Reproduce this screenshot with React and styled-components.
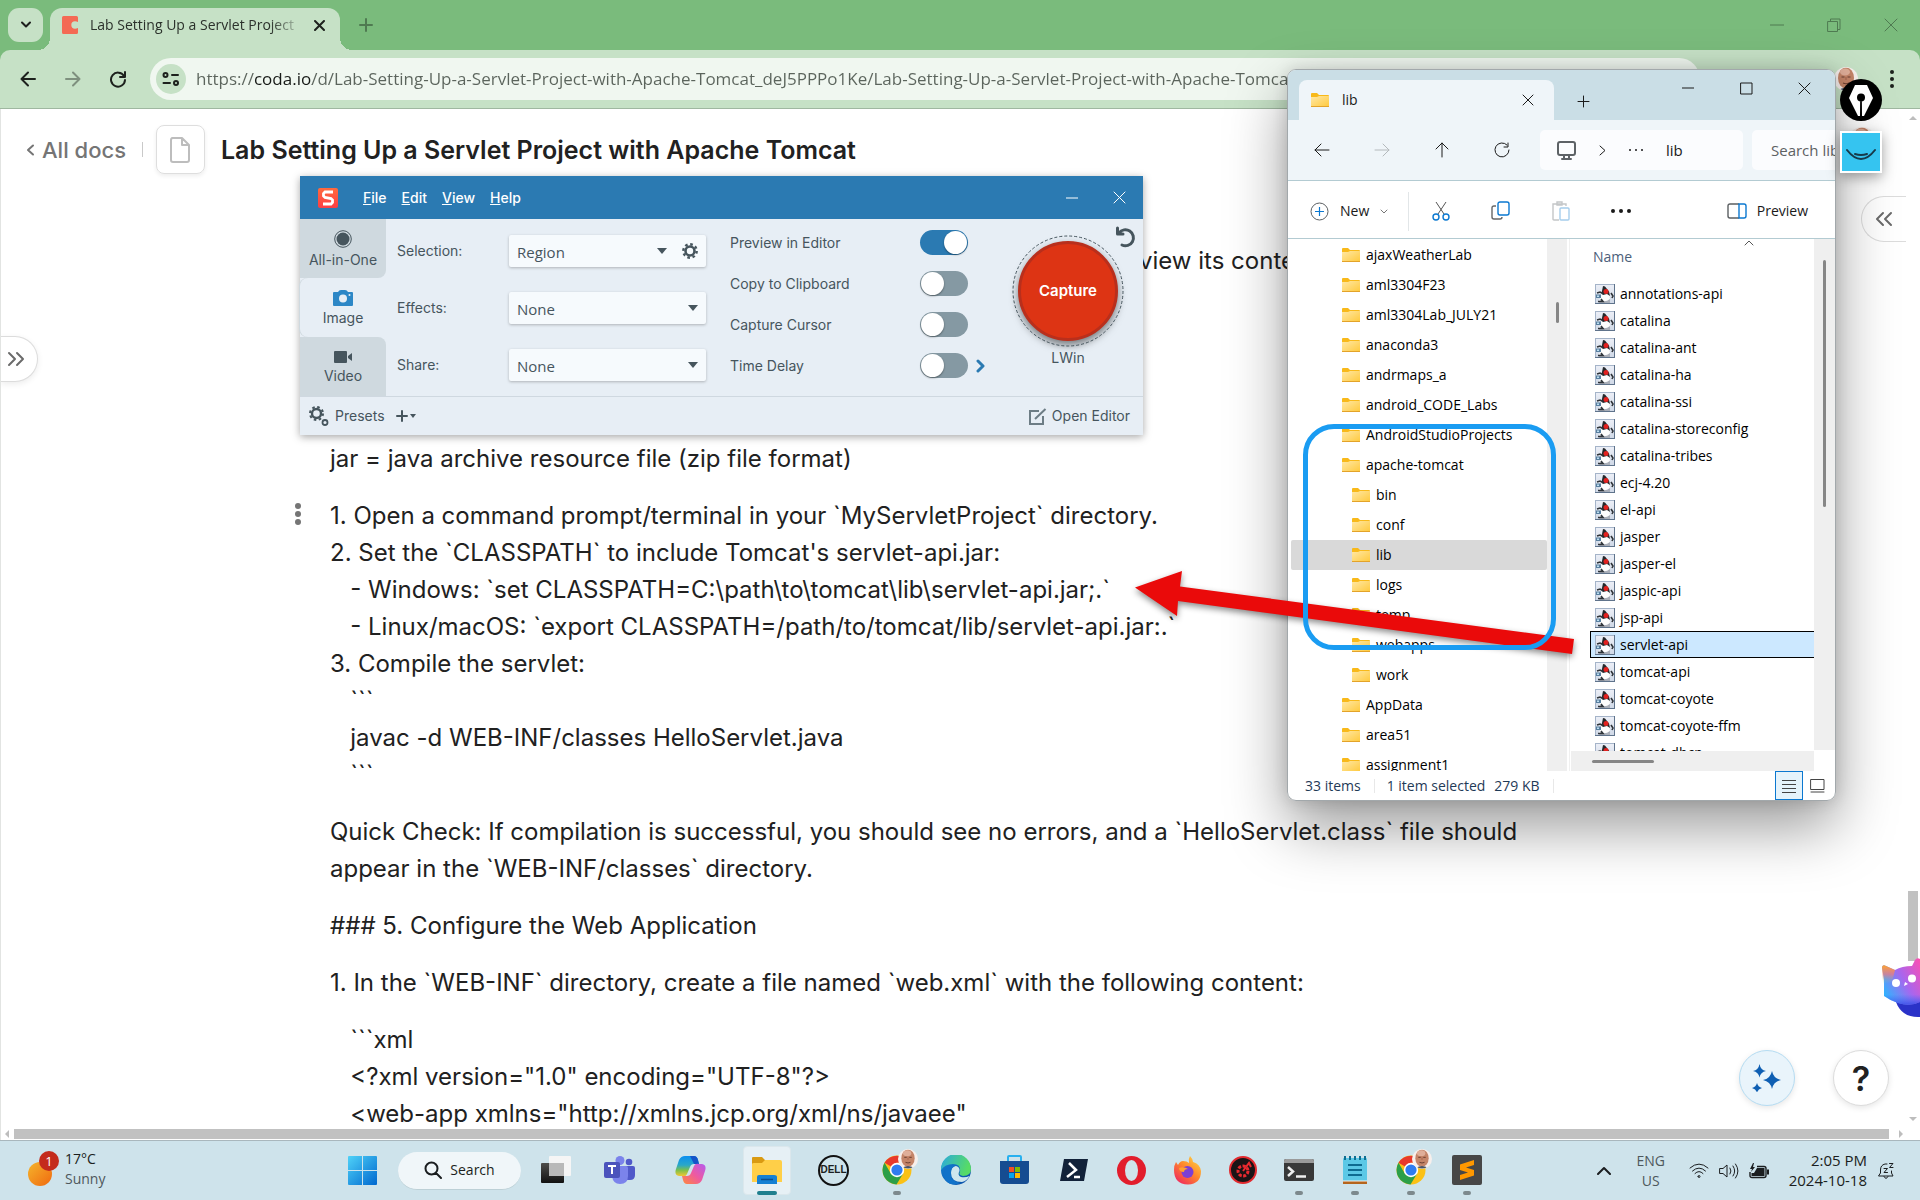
import React from "react";
import styled, { createGlobalStyle, css } from "styled-components";

const SEGOE = `"Open Sans", "Noto Sans", sans-serif`;
const INTER = `Inter, "Liberation Sans", sans-serif`;

const GlobalStyle = createGlobalStyle`
  *, *::before, *::after { box-sizing: border-box; }
  body { margin: 0; font-family: ${SEGOE}; background: #fff; }
  button { border: 0; padding: 0; margin: 0; background: none; color: inherit; font: inherit; display: inline-flex; align-items: center; justify-content: center; flex: none; }
  input, select { font: inherit; color: inherit; margin: 0; }
  ul { list-style: none; margin: 0; padding: 0; }
  p, h1 { margin: 0; }
  svg { display: block; flex: none; }
`;

const Desktop = styled.div`
  position: relative;
  height: 100vh;
  overflow: hidden;
  display: flex;
  flex-direction: column;
`;

/* ---------- browser ---------- */

const Browser = styled.section`
  flex: 1;
  min-height: 0;
  display: flex;
  flex-direction: column;
  background: #7abb7c;
`;

const TabStrip = styled.header`
  height: 50px;
  flex: none;
  display: flex;
  align-items: flex-start;
  padding: 8px 1px 0 8px;
  color: #4f7a51;
`;

const TabSearch = styled.button`
  width: 35px;
  height: 34px;
  border-radius: 11px;
  background: #c6e1c6;
  color: #1d1f1d;
`;

const Tab = styled.div`
  position: relative;
  width: 290px;
  height: 42px;
  margin-left: 7px;
  padding: 0 15px 8px 12px;
  border-radius: 12px 12px 0 0;
  background: #c6e1c6;
  color: #2b312b;
  display: flex;
  align-items: center;
  gap: 12px;

  &::before,
  &::after {
    content: "";
    position: absolute;
    bottom: 0;
    width: 12px;
    height: 12px;
  }
  &::before { left: -12px; background: radial-gradient(circle at 0 0, transparent 12px, #c6e1c6 12px); }
  &::after { right: -12px; background: radial-gradient(circle at 100% 0, transparent 12px, #c6e1c6 12px); }
  button { margin-left: auto; color: #1d211d; }
`;

const TabTitle = styled.span`
  white-space: nowrap;
  font-size: 14px;
  line-height: 24px;
  mask-image: linear-gradient(90deg, #000 88%, rgba(0, 0, 0, 0.3));
`;

const NewTab = styled.button`
  width: 28px;
  height: 34px;
  margin-left: 12px;
`;

const WindowButtons = styled.div`
  display: flex;
  margin-left: auto;
  button { width: 57px; height: 34px; }
`;

const Toolbar = styled.div`
  height: 59px;
  flex: none;
  display: flex;
  align-items: center;
  padding: 0 26px 1px 14px;
  background: #c6e1c6;
  border-bottom: 1px solid #9fb7a0;
  border-radius: 10px 10px 0 0;
  color: #1d211d;
`;

const NavButton = styled.button`
  width: 28px;
  height: 28px;
  margin-right: 17px;
  opacity: ${(p) => (p.$dim ? 0.42 : 1)};
`;

const Omnibox = styled.label`
  flex: 1;
  max-width: 1550px;
  height: 42px;
  margin-left: 1px;
  padding-left: 6px;
  border-radius: 21px;
  background: #f0f7f0;
  display: flex;
  align-items: center;
  gap: 10px;
`;

const SiteInfo = styled.span`
  width: 30px;
  height: 30px;
  border-radius: 50%;
  background: #c6e1c6;
  display: grid;
  place-items: center;
`;

const UrlInput = styled.input`
  flex: 1;
  min-width: 0;
  height: 32px;
  border: 0;
  padding: 0;
  font-size: 17px;
  color: #5b645c;
  -webkit-text-fill-color: transparent;
  background: linear-gradient(90deg, #5b645c 58px, #161916 58px, #161916 116px, #5b645c 116px);
  -webkit-background-clip: text;
  background-clip: text;
`;

const ToolbarEnd = styled.div`
  margin-left: auto;
  display: flex;
  align-items: center;
  gap: 32px;
`;

const Viewport = styled.div`
  flex: 1;
  min-height: 0;
  display: grid;
  grid-template-columns: minmax(0, 1fr) 14px;
  grid-template-rows: minmax(0, 1fr) 12px;
  background: #fff;
  border-left: 1px solid #e2e4e2;
  color: #212121;
  font-family: ${INTER};
`;

const Doc = styled.main`
  position: relative;
  overflow: hidden;
`;

const DocHeader = styled.div`
  display: flex;
  align-items: center;
  padding: 16px 0 0 24px;
  font-size: 22px;
  line-height: 28px;
  font-weight: 500;
`;

const BackLink = styled.a`
  display: flex;
  align-items: center;
  gap: 7px;
  color: #757575;
  text-decoration: none;
  padding-right: 16px;
`;

const HeaderRule = styled.span`
  width: 1px;
  height: 15px;
  background: #c9c9c9;
`;

const PageIcon = styled.button`
  width: 49px;
  height: 49px;
  margin: 0 16px 0 13px;
  border: 1px solid #dedede;
  border-radius: 8px;
  box-shadow: 0 2px 4px rgba(0, 0, 0, 0.07);
`;

const DocTitle = styled.h1`
  font-size: 25px;
  line-height: 30px;
  font-weight: 600;
`;

const DocBody = styled.article`
  padding: 68px 0 0 329px;
  font-size: 24px;
  line-height: 37px;
`;

const Paragraph = styled.p`
  max-width: 1250px;
  margin-bottom: 20px;
  white-space: pre-wrap;
`;

const TrailingLine = styled(Paragraph)`
  max-width: none;
  padding-left: 809px;
  margin-bottom: 161px;
`;

const DragHandle = styled.button`
  position: absolute;
  left: 290px;
  top: 392px;
  width: 14px;
  height: 26px;
`;

const SideTab = styled.button`
  position: absolute;
  width: 45px;
  height: 46px;
  background: #fff;
  border: 1px solid #dcdcdc;
  color: #6b6b6b;
  ${(p) =>
    p.$side === "left"
      ? css`left: 0; top: 227px; width: 37px; border-left: 0; border-radius: 0 23px 23px 0; box-shadow: 0 2px 6px rgba(0, 0, 0, 0.08); padding-right: 6px;`
      : css`right: 0; top: 87px; border-right: 0; border-radius: 23px 0 0 23px;`}
`;

const RoundButton = styled.button`
  width: 56px;
  height: 56px;
  border-radius: 50%;
  border: 1px solid ${(p) => (p.$accent ? "#b5dcf2" : "#dcdcdc")};
  background: ${(p) => (p.$accent ? "#e9f4fb" : "#fff")};
  box-shadow: 0 2px 6px rgba(0, 0, 0, 0.1);
  font-size: 34px;
  font-weight: 600;
`;

const FloatingActions = styled.div`
  position: absolute;
  right: 17px;
  bottom: 22px;
  display: flex;
  gap: 38px;
`;

const Mascot = styled.div`
  position: absolute;
  right: 0;
  bottom: 182px;
`;

const VScroll = styled.div`
  display: flex;
  flex-direction: column;
  align-items: center;
  padding: 6px 2px 6px;
  svg:last-child { margin-top: auto; }
`;

const VThumb = styled.span`
  width: 10px;
  height: 70px;
  margin-top: 771px;
  background: #c1c1c1;
`;

const HScroll = styled.div`
  grid-column: 1 / -1;
  display: flex;
  align-items: center;
  gap: 5px;
  padding: 0 16px 0 3px;
`;

const HThumb = styled.span`
  flex: 1;
  height: 10px;
  background: #c1c1c1;
  margin-right: 5px;
`;

/* ---------- capture window ---------- */

const CaptureWindow = styled.section`
  position: absolute;
  left: 300px;
  top: 176px;
  width: 843px;
  background: #e7eef5;
  box-shadow: 0 2px 8px rgba(0, 0, 0, 0.35);
  color: #46555d;
  font-family: ${INTER};
  font-size: 14px;
  line-height: 20px;
`;

const CaptureTitle = styled.header`
  height: 43px;
  padding: 0 6px 0 18px;
  background: #2b7ab2;
  color: #fff;
  display: flex;
  align-items: center;
`;

const MenuBar = styled.nav`
  display: flex;
  gap: 15px;
  margin-left: 25px;
  font-weight: 500;
`;

const MenuItem = styled.button`
  display: block;
  &::first-letter { text-decoration: underline; }
`;

const CaptureButtons = styled.div`
  margin-left: auto;
  display: flex;
  button { width: 58px; height: 40px; }
  button:last-child { width: 36px; }
`;

const CaptureBody = styled.div`
  height: 178px;
  display: grid;
  grid-template-columns: 86px 330px 262px 1fr;
  border-bottom: 1px solid #cfd8e0;
`;

const ModeTabs = styled.div`
  display: grid;
  grid-template-rows: repeat(3, 1fr);
  background: #e7eef5;
`;

const ModeTab = styled.button`
  flex-direction: column;
  gap: 2px;
  padding-top: 2px;
  font-size: 14px;
  background: ${(p) => (p.$active ? "#e7eef5" : "#cfd9df")};
  border-radius: ${(p) => p.$corners};
  box-shadow: ${(p) => (p.$active ? "-1px 0 0 #cfd9df" : "none")};
`;

const Fields = styled.div`
  display: grid;
  grid-template-rows: repeat(3, 32px);
  gap: 25px;
  padding: 16px 10px 0 11px;
`;

const Field = styled.label`
  display: grid;
  grid-template-columns: 112px 1fr;
  align-items: center;
`;

const SelectBox = styled.span`
  position: relative;
  height: 32px;
  display: flex;
  align-items: center;
  background: #f6fafd;
  border-radius: 2px;
  box-shadow: 0 1px 3px rgba(0, 0, 0, 0.25);
  padding-right: 8px;
  gap: 15px;

  select {
    flex: 1;
    align-self: stretch;
    appearance: none;
    border: 0;
    background: none;
    padding: 1px 8px 0;
    font-family: ${SEGOE};
    font-size: 15px;
  }
`;

const Toggles = styled.div`
  display: grid;
  grid-template-rows: repeat(4, 25px);
  gap: 16px;
  padding: 11px 0 0 14px;
`;

const ToggleRow = styled.label`
  display: grid;
  grid-template-columns: 190px 48px 1fr;
  align-items: center;
  svg { margin-left: 8px; }
`;

const Toggle = styled.input`
  appearance: none;
  width: 48px;
  height: 25px;
  border-radius: 13px;
  padding: 1px;
  background: #8599a3;
  display: flex;

  &::before {
    content: "";
    width: 23px;
    height: 23px;
    border-radius: 50%;
    background: #fff;
    box-shadow: 0 1px 2px rgba(0, 0, 0, 0.4);
  }
  &:checked { background: #2b7ab2; justify-content: flex-end; }
`;

const CapturePanel = styled.div`
  position: relative;
  display: flex;
  flex-direction: column;
  align-items: center;
  gap: 1px;
  padding: 16px 0 0 15px;
`;

const CaptureRing = styled.div`
  position: relative;
  width: 112px;
  height: 112px;
  display: grid;
  place-items: center;
  > svg { position: absolute; inset: 0; }
`;

const CaptureButton = styled.button`
  width: 100px;
  height: 100px;
  border-radius: 50%;
  border: 3px solid #b92f1c;
  background: #dd3414;
  box-shadow: 0 4px 8px rgba(0, 0, 0, 0.5);
  color: #fff;
  font-size: 15px;
  font-weight: 600;
`;

const ResetButton = styled.button`
  position: absolute;
  right: 6px;
  top: 7px;
`;

const CaptureFooter = styled.footer`
  height: 38px;
  padding: 0 13px 0 9px;
  display: flex;
  align-items: center;
  button { gap: 6px; }
  button + button { margin-left: 11px; gap: 2px; }
  button:last-child { margin-left: auto; gap: 5px; }
`;

/* ---------- file explorer ---------- */

const Explorer = styled.section`
  position: absolute;
  left: 1287px;
  top: 69px;
  width: 549px;
  height: 732px;
  overflow: hidden;
  display: flex;
  flex-direction: column;
  background: #fff;
  border: 1px solid #a2a8ab;
  border-radius: 9px;
  color: #1a1a1a;
  font-size: 14px;
  line-height: 20px;
`;

const ExplorerShadow = styled.div`
  position: absolute;
  left: 1287px;
  top: 69px;
  width: 549px;
  height: 732px;
  border-radius: 9px;
  box-shadow: 0 26px 60px rgba(0, 0, 0, 0.4), 0 0 16px rgba(0, 0, 0, 0.14);
`;

const ExplorerTabs = styled.header`
  height: 50px;
  flex: none;
  padding: 0 2px 0 11px;
  background: #cadee6;
  display: flex;
  align-items: flex-end;
`;

const ExplorerTab = styled.div`
  width: 255px;
  height: 40px;
  padding: 0 20px 0 12px;
  display: flex;
  align-items: center;
  gap: 13px;
  background: #eff5f9;
  border-radius: 8px 8px 0 0;
  font-weight: 500;
  button { margin-left: auto; }
`;

const ExplorerNewTab = styled.button`
  width: 58px;
  height: 38px;
`;

const ExplorerButtons = styled.div`
  margin-left: auto;
  align-self: flex-start;
  display: flex;
  button { width: 58px; height: 36px; }
`;

const ExplorerNav = styled.div`
  height: 61px;
  flex: none;
  display: flex;
  align-items: center;
  background: #eff5f9;
  border-bottom: 1px solid #b3cbd2;
  padding-left: 4px;
  > button { width: 60px; height: 40px; }
`;

const Breadcrumb = styled.nav`
  width: 203px;
  height: 40px;
  margin-left: 8px;
  padding-left: 17px;
  border-radius: 5px;
  background: #fbfcfe;
  display: flex;
  align-items: center;
  gap: 23px;
  flex: none;
  font-size: 15px;
`;

const ExplorerSearch = styled.input`
  flex: 1 0 180px;
  height: 40px;
  margin-left: 9px;
  border: 0;
  border-radius: 5px 0 0 5px;
  background: #fbfcfe;
  padding: 0 19px;
  font-size: 15px;
  &::placeholder { color: #5d6163; opacity: 1; }
`;

const CommandBar = styled.div`
  height: 58px;
  flex: none;
  display: flex;
  align-items: center;
  border-bottom: 1px solid #b3cbd2;
  padding: 3px 27px 0 22px;
  > button { width: 60px; height: 40px; }
  > button:first-child { width: auto; gap: 11px; }
  > button:last-child { width: auto; gap: 10px; margin-left: auto; }
`;

const CommandRule = styled.span`
  width: 1px;
  height: 39px;
  margin: 0 2px 0 20px;
  background: #e2e6e8;
`;

const Panes = styled.div`
  flex: 1;
  min-height: 0;
  display: grid;
  grid-template-columns: 259px 20px 4px 243px 1fr;
`;

const Tree = styled.ul`
  overflow: hidden;
  padding: 1px 0 0 3px;
`;

const TreeItem = styled.li`
  height: 30px;
  border-radius: 2px;
  background: ${(p) => (p.$selected ? "#d9d9d9" : "transparent")};
  button {
    height: 30px;
    gap: 6px;
    padding-left: ${(p) => (p.$nested ? 61 : 51)}px;
    white-space: nowrap;
    color: #000;
  }
`;

const Track = styled.div`
  background: #efefef;
  display: flex;
  flex-direction: ${(p) => (p.$horizontal ? "row" : "column")};
  align-items: center;
`;

const PaneRule = styled.div`
  border-left: 1px solid #f0f0f0;
  margin-left: 2px;
`;

const Thumb = styled.span`
  width: 3px;
  height: ${(p) => p.$length}px;
  margin-top: ${(p) => p.$start}px;
  border-radius: 2px;
  background: #868686;
`;

const HorizontalThumb = styled.span`
  width: 62px;
  height: 3px;
  margin-left: 21px;
  border-radius: 2px;
  background: #868686;
`;

const ListPane = styled.div`
  display: flex;
  flex-direction: column;
  min-height: 0;
  ${Track} { height: 20px; flex: none; }
`;

const ListClip = styled.div`
  flex: 1;
  min-height: 0;
  overflow: hidden;
  padding-left: 19px;
`;

const FileTable = styled.table`
  width: 100%;
  border-collapse: separate;
  border-spacing: 0;
  th {
    height: 41px;
    padding: 0 0 6px 3px;
    text-align: left;
    font-weight: 400;
    color: #4c607a;
  }
  th svg { float: right; margin: -7px 60px 0 0; }
`;

const FileRow = styled.tr`
  td {
    height: 27px;
    padding: 0 0 0 4px;
    border: 1px solid ${(p) => (p.$selected ? "#000" : "transparent")};
    border-right: 0;
    background: ${(p) => (p.$selected ? "#cce8ff" : "transparent")};
    color: #000;
  }
`;

const FileName = styled.span`
  display: flex;
  align-items: center;
  gap: 5px;
  height: 25px;
  white-space: nowrap;
`;

const ListScroll = styled.div`
  padding-bottom: 21px;
  display: flex;
  ${Track} { flex: 1; }
`;

const StatusBar = styled.footer`
  height: 29px;
  flex: none;
  padding: 0 4px 0 17px;
  display: flex;
  align-items: center;
  gap: 12px;
  color: #1f3a57;
`;

const StatusGroup = styled.span`
  display: flex;
  gap: 9px;
  line-height: 14px;
  padding-right: 13px;
  border-right: 1px solid #e8e8e8;
`;

const ViewButtons = styled.div`
  margin-left: auto;
  display: flex;
  button { width: 28px; height: 29px; }
  button:first-child { border: 1px solid #0b78d0; background: #e5f3fb; }
`;

/* ---------- annotations ---------- */

const RedArrow = styled.svg`
  position: absolute;
  left: 1130px;
  top: 560px;
  filter: drop-shadow(0 3px 3px rgba(0, 0, 0, 0.45));
`;

const Callout = styled.div`
  position: absolute;
  left: 1303px;
  top: 424px;
  width: 253px;
  height: 226px;
  border: 5px solid #1a9cf2;
  border-radius: 31px;
`;

const PenBadge = styled.div`
  position: absolute;
  right: 38px;
  top: 79px;
`;

const NoteBadge = styled.div`
  position: absolute;
  right: 38px;
  top: 131px;
  width: 42px;
  height: 42px;
  background: #35c4f0;
  border: 2px solid #fff;
  box-shadow: 0 4px 12px rgba(0, 0, 0, 0.35);
  display: grid;
  place-items: center;
  padding-top: 5px;
`;

const NoteAvatar = styled.div`
  position: absolute;
  right: 44px;
  top: 127px;
`;

/* ---------- taskbar ---------- */

const Taskbar = styled.footer`
  height: 60px;
  flex: none;
  display: flex;
  align-items: stretch;
  background: #cee3eb;
  border-top: 1px solid #a9b7bd;
  color: #1b1e20;
  font-size: 14px;
  line-height: 20px;
`;

const Weather = styled.button`
  width: 326px;
  justify-content: flex-start;
  gap: 4px;
  padding: 0 0 4px 28px;
  text-align: left;
`;

const Muted = styled.span`
  display: block;
  color: #4e585c;
`;

const Apps = styled.nav`
  flex: 1;
  display: flex;
`;

const AppSlot = styled.button`
  position: relative;
  width: ${(p) => p.$w}px;
  height: 58px;
  ${(p) =>
    p.$running &&
    css`
      &::after {
        content: "";
        position: absolute;
        bottom: 4px;
        left: calc(50% - ${p.$active ? 10 : 4}px);
        width: ${p.$active ? 20 : 8}px;
        height: 4px;
        border-radius: 2px;
        background: ${p.$active ? "#1f7f8e" : "#7d898d"};
      }
    `}
`;

const ActiveTile = styled.span`
  width: 48px;
  height: 49px;
  border-radius: 4px;
  background: #e6f0f5;
  border: 1px solid #dbe7ec;
  display: grid;
  place-items: center;
`;

const SearchPill = styled.button`
  width: 123px;
  height: 38px;
  align-self: center;
  gap: 8px;
  border-radius: 19px;
  background: #f0f6f9;
  border-bottom: 1px solid #bdd0d6;
`;

const Tray = styled.div`
  display: flex;
  align-items: center;
  padding-right: 25px;
  gap: 10px;
`;

const TrayLanguage = styled.button`
  flex-direction: column;
  width: 56px;
  margin-left: 2px;
`;

const Clock = styled.button`
  flex-direction: column;
  align-items: flex-end;
  margin-left: 10px;
  padding-bottom: 1px;
  font-size: 15px;
`;

/* ---------- drawings ---------- */

const Line = ({ d, w = 20, h = w, sw = 2, box = `0 0 ${w} ${h}`, color = "currentColor", ...rest }) => (
  <svg width={w} height={h} viewBox={box} fill="none" stroke={color} strokeWidth={sw} strokeLinecap="round" strokeLinejoin="round" aria-hidden="true" {...rest}>
    <path d={d} />
  </svg>
);

const Triangle = ({ d, w = 10, h = 6, color = "currentColor" }) => (
  <svg width={w} height={h} aria-hidden="true"><path d={d} fill={color} /></svg>
);

const Folder = () => (
  <svg width="18" height="14" viewBox="0 0 18 14" aria-hidden="true">
    <defs>
      <linearGradient id="folderFace" x1="0" y1="0" x2="1" y2="1">
        <stop offset="0" stopColor="#ffe8a6" /><stop offset="1" stopColor="#ffc93c" />
      </linearGradient>
    </defs>
    <path d="M0 1Q0 0 1 0H6L8 2H17Q18 2 18 3V12H0Z" fill="#f8b91a" />
    <path d="M0 4H6L8 3H18V13Q18 14 17 14H1Q0 14 0 13Z" fill="url(#folderFace)" />
    <path d="M0 13.500H18" stroke="#e3a32a" />
  </svg>
);

const Duke = () => (
  <svg width="20" height="20" viewBox="0 0 20 20" aria-hidden="true">
    <defs>
      <linearGradient id="dukeSky" x1="0" y1="0" x2="0" y2="1"><stop stopColor="#eceff7" /><stop offset="1" stopColor="#cfd8e6" /></linearGradient>
    </defs>
    <rect x=".5" y=".5" width="19" height="19" fill="url(#dukeSky)" stroke="#a5b4c9" />
    <path d="M7 9L4 17L6 19H15L14.500 9Z" fill="#fdfdfd" />
    <path d="M5 16Q10 19 15 15V19H4Z" fill="#a9aeb8" />
    <path d="M6.500 9.500L8 2L10 2.500L14 7.500L15 12L12 10L8 11Z" fill="#26282c" />
    <path d="M2 9L5 8L8 9.500M16 9L18 12L17 14M3 17.500H8L6 15" stroke="#2e3338" strokeWidth="1.600" fill="none" />
    <path d="M1 10.500H6V14H1Z" fill="#587f9f" /><path d="M2 11.500H4V13H2Z" fill="#bfe0f2" />
    <circle cx="11" cy="7.500" r="2.500" fill="#e2211f" />
    <path d="M0 19.500H20M19.500 0V20" stroke="#5f738b" />
  </svg>
);

const Gear = ({ size = 16 }) => (
  <svg width={size} height={size} viewBox="0 0 16 16" aria-hidden="true" fill="none" stroke="currentColor">
    <circle cx="8" cy="8" r="4.500" strokeWidth="2.600" />
    <circle cx="8" cy="8" r="6.700" strokeWidth="2.400" strokeDasharray="2.630 2.630" />
  </svg>
);

const Face = ({ size = 24 }) => (
  <svg width={size} height={size} viewBox="0 0 24 24" aria-hidden="true">
    <defs><clipPath id="faceClip"><ellipse cx="12" cy="12" rx="11" ry="11.500" /></clipPath></defs>
    <circle cx="12" cy="12" r="12" fill="#f7efec" />
    <g clipPath="url(#faceClip)">
      <ellipse cx="12" cy="11" rx="8" ry="10.500" fill="#c48468" />
      <ellipse cx="11" cy="5" rx="5" ry="3.500" fill="#dfae99" />
      <path d="M7.500 10H10.500M13.500 10H16.500M9 16Q12 17.500 15 16" stroke="#6d4032" strokeWidth="1.200" fill="none" />
      <path d="M12 10V13" stroke="#a8674f" strokeWidth="1.200" />
      <path d="M3 24Q12 17 21 24Z" fill="#4a5568" />
    </g>
  </svg>
);

const CodaLogo = () => (
  <svg width="16" height="18" viewBox="0 0 16 18" aria-hidden="true">
    <path d="M1.500 0H14.500Q16 0 16 1.500V6Q14.500 5.300 13 5.300A3.700 3.700 0 0 0 13 12.700Q14.500 12.700 16 12V16.500Q16 18 14.500 18H1.500Q0 18 0 16.500V1.500Q0 0 1.500 0Z" fill="#f46a54" />
  </svg>
);

const Chrome = () => (
  <svg width="30" height="30" viewBox="0 0 30 30" aria-hidden="true">
    <circle cx="15" cy="15" r="14.500" fill="#fbc116" />
    <path d="M15 15L2.500 7.800A14.500 14.500 0 0 1 27.500 7.800H15Z" fill="#e8392b" />
    <path d="M2.500 7.700A14.500 14.500 0 0 0 14.500 29.500L21.200 18.600L15 15L8.800 18.600Z" fill="#2c9f48" />
    <circle cx="15" cy="15" r="7.200" fill="#fff" />
    <circle cx="15" cy="15" r="5.600" fill="#2f7cf0" />
  </svg>
);

const ProfileBadge = styled.span`
  position: absolute;
  left: calc(50% + 1px);
  top: 8px;
`;

const ChromeProfile = () => (<><Chrome /><ProfileBadge><Face size={20} /></ProfileBadge></>);

const WindowsLogo = () => (
  <svg width="29" height="29" aria-hidden="true">
    <defs><linearGradient id="winBlue" x1="0" y1="0" x2="29" y2="29" gradientUnits="userSpaceOnUse"><stop offset="0" stopColor="#4fd2f8" /><stop offset="1" stopColor="#0068cf" /></linearGradient></defs>
    <path d="M0 1Q0 0 1 0H14V14H0ZM15 0H28Q29 0 29 1V14H15ZM0 15H14V29H1Q0 29 0 28ZM15 15H29V28Q29 29 28 29H15Z" fill="url(#winBlue)" />
  </svg>
);

const TaskView = () => (
  <svg width="30" height="28" aria-hidden="true">
    <defs><linearGradient id="tvDark" x2="0" y2="1"><stop stopColor="#4d4d4a" /><stop offset="1" stopColor="#111" /></linearGradient></defs>
    <rect y="7" width="23" height="20" rx="1" fill="url(#tvDark)" />
    <rect x="8" width="22" height="20" rx="1" fill="#f5f5f5" />
    <rect x="8" y="7" width="15" height="13" fill="#b9b9b9" />
  </svg>
);

const Teams = () => (
  <svg width="31" height="28" viewBox="0 0 31 28" aria-hidden="true">
    <circle cx="25" cy="6" r="3.300" fill="#5059c9" /><circle cx="16" cy="4.500" r="4.500" fill="#7b83eb" />
    <path d="M20 10H29Q31 10 31 12V19Q31 24 26 24H20Z" fill="#5059c9" />
    <path d="M9 10H22Q24 10 24 12V20Q24 28 16 28Q9 28 8 20V11Z" fill="#7b83eb" />
    <rect y="6" width="16" height="16" rx="2" fill="#4b53bc" /><path d="M4 10H12M8 10V18" stroke="#fff" strokeWidth="2" />
  </svg>
);

const Copilot = () => (
  <svg width="31" height="28" viewBox="0 0 31 28" aria-hidden="true">
    <defs>
      <linearGradient id="cpL" x1="0" y1="0" x2="0" y2="1"><stop stopColor="#0b8ff0" /><stop offset=".45" stopColor="#2aa7c9" /><stop offset=".7" stopColor="#7cc04b" /><stop offset="1" stopColor="#f5c733" /></linearGradient>
      <linearGradient id="cpR" x1="1" y1="0" x2="0" y2="1"><stop stopColor="#b45bf0" /><stop offset=".5" stopColor="#ee5aa0" /><stop offset="1" stopColor="#ff8a3a" /></linearGradient>
    </defs>
    <path d="M10 0H19Q22 0 23 4L24 8H19Q16 8 15 11L12 18Q11 21 7 20H4Q-1 19 1 13L4 4Q6 0 10 0Z" fill="url(#cpL)" />
    <path d="M15 0H19Q22 0 23 4L24 8H19Z" fill="#1454c8" />
    <path d="M21 28H12Q9 28 8 24L7 20H12Q15 20 16 17L19 10Q20 7 24 8H27Q32 9 30 15L27 24Q25 28 21 28Z" fill="url(#cpR)" />
  </svg>
);

const ExplorerApp = () => (
  <svg width="30" height="28" aria-hidden="true">
    <path d="M0 2Q0 1 1 1H10L13 4H28V24H0Z" fill="#d99a12" /><path d="M0 8Q0 7 2 7H10L13 4H28Q30 4 30 6V26H0Z" fill="#ffcf48" />
    <path d="M5 28V21Q5 19 7 19H22Q25 19 25 21V28Z" fill="#1580d3" /><path d="M9 23.500H21" stroke="#0b4f8f" strokeWidth="1.500" />
  </svg>
);

const DellWord = styled.span`
  width: 31px;
  height: 31px;
  border: 2px solid #111;
  border-radius: 50%;
  display: grid;
  place-items: center;
  font: 700 10px/10px "Liberation Sans", sans-serif;
`;

const Edge = () => (
  <svg width="30" height="30" viewBox="0 0 30 30" aria-hidden="true">
    <defs>
      <linearGradient id="edA" x1="0" y1="0" x2="1" y2=".3"><stop stopColor="#2aa9e0" /><stop offset="1" stopColor="#57dc65" /></linearGradient>
      <linearGradient id="edB" x1="0" y1="0" x2="1" y2="1"><stop stopColor="#1684d6" /><stop offset="1" stopColor="#0b4ca4" /></linearGradient>
    </defs>
    <circle cx="15" cy="15" r="15" fill="url(#edB)" />
    <path d="M0 14A15 15 0 0 1 30 14Q30 21 22 21Q17 20 19 17Q20 9 12 9Q4 9 0 15Z" fill="url(#edA)" />
    <path d="M10 18Q10 11 15 11Q19 12 18.500 16Q16 20 20 22Q24 23 28.500 21Q26 26 21 27Q10 27 10 18Z" fill="#cfe6ee" />
    <path d="M10 17Q8 26 19 28Q11 32 5 26Q0 18 6 12Q10 9 14 11Q10 13 10 17Z" fill="#1172c9" />
  </svg>
);

const Store = () => (
  <svg width="29" height="30" aria-hidden="true">
    <path d="M8 7V2Q8 1 9 1H20Q21 1 21 2V7" fill="none" stroke="#28b0ef" strokeWidth="2" />
    <path d="M0 6H29V26Q29 29 26 29H3Q0 29 0 26Z" fill="#154c91" />
    <path d="M9 12H14V17H9Z" fill="#f04f23" /><path d="M15 12H20V17H15Z" fill="#7fba00" /><path d="M9 18H14V23H9Z" fill="#03a4ef" /><path d="M15 18H20V23H15Z" fill="#ffb901" />
  </svg>
);

const PowerShell = () => (
  <svg width="28" height="22" aria-hidden="true">
    <path d="M4 0H28L24 22H0Z" fill="#122239" />
    <path d="M9 4L16 11L7 18M14 18H20" stroke="#fff" strokeWidth="2.500" fill="none" />
  </svg>
);

const Opera = () => (
  <svg width="29" height="29" aria-hidden="true">
    <circle cx="14.500" cy="14.500" r="14.500" fill="#e21d2c" /><ellipse cx="14.500" cy="14.500" rx="6.500" ry="10.500" fill="#cfe3eb" />
  </svg>
);

const Firefox = () => (
  <svg width="29" height="29" viewBox="0 0 29 29" aria-hidden="true">
    <defs><linearGradient id="ffx" x1="1" y1="0" x2=".2" y2="1"><stop stopColor="#ffe14d" /><stop offset=".5" stopColor="#ff8a2a" /><stop offset="1" stopColor="#f0285e" /></linearGradient></defs>
    <path d="M17 0Q20 3 20 6Q27 8 28 15Q28 28 15 28.500Q1 28 1 14Q1 9 3 6L5 9Q7 5 10 5Q14 5 16 7Q15 3 17 0Z" fill="url(#ffx)" />
    <circle cx="14.500" cy="16" r="6" fill="#7b3fd6" /><path d="M6 12Q11 10 15 13Q11 13 11 16Q6 16 6 12Z" fill="#ffa02f" />
  </svg>
);

const RedGear = () => (
  <svg width="28" height="28" viewBox="0 0 28 28" aria-hidden="true">
    <circle cx="14" cy="14" r="13" fill="#1b1416" stroke="#e22a2f" strokeWidth="2" />
    <circle cx="14" cy="15" r="5" fill="none" stroke="#e8292f" strokeWidth="3" strokeDasharray="3 1.500" />
    <path d="M14 15L20 7L22 11" stroke="#e8292f" strokeWidth="2" fill="none" />
  </svg>
);

const Terminal = () => (
  <svg width="30" height="22" aria-hidden="true">
    <rect width="30" height="22" rx="2" fill="#383838" /><path d="M0 4V2Q0 0 2 0H28Q30 0 30 2V4Z" fill="#9a9a9a" />
    <path d="M4 8L9 12.500L4 17M12 17.500H22" stroke="#eee" strokeWidth="2.500" fill="none" />
  </svg>
);

const Notepad = () => (
  <svg width="24" height="30" aria-hidden="true">
    <rect y="3" width="24" height="24" rx="1" fill="#5cc8e6" /><path d="M2 1V5M7 1V5M12 1V5M17 1V5M22 1V5" stroke="#0d6f93" strokeWidth="2" />
    <path d="M5 10H19M5 15H19M5 20H19" stroke="#0e6b91" strokeWidth="2" /><path d="M0 26H24V29H0Z" fill="#b5651d" /><path d="M0 26H24" stroke="#f4f4f4" />
  </svg>
);

const Sublime = () => (
  <svg width="30" height="30" aria-hidden="true">
    <rect width="30" height="30" rx="2" fill="#474747" />
    <path d="M22 5V10L14 12.500L22 15V20.500L8 25V20L16 17.500L8 15V9.500Z" fill="#ff9800" />
  </svg>
);

const Sun = () => (
  <svg width="33" height="38" viewBox="0 0 33 38" aria-hidden="true">
    <defs><linearGradient id="sunFill" x1="0" y1="0" x2="1" y2="1"><stop stopColor="#f5b52c" /><stop offset="1" stopColor="#f0690f" /></linearGradient></defs>
    <circle cx="12" cy="24" r="12" fill="url(#sunFill)" /><circle cx="21" cy="11" r="10" fill="#c42b1c" />
    <text x="21" y="16" textAnchor="middle" fontSize="13" fill="#fff" fontFamily="Open Sans, sans-serif">1</text>
  </svg>
);

const SnagitLogo = () => (
  <svg width="20" height="20" aria-hidden="true">
    <defs><linearGradient id="sng" x2="0" y2="1"><stop stopColor="#ff6a3d" /><stop offset="1" stopColor="#fb3d45" /></linearGradient></defs>
    <rect width="20" height="20" rx="2" fill="url(#sng)" />
    <path d="M15 4H7L5.500 5.500V8L7 9.500L13 10.500L14.500 12V14.500L13 16H5" fill="none" stroke="#fff" strokeWidth="2.800" />
  </svg>
);

const Cat = () => (
  <svg width="38" height="60" viewBox="0 0 38 60" aria-hidden="true">
    <defs>
      <linearGradient id="catFace" x1="0" y1=".7" x2="1" y2="0"><stop stopColor="#2fb4ff" /><stop offset=".5" stopColor="#a866ee" /><stop offset="1" stopColor="#ff4fb0" /></linearGradient>
      <linearGradient id="catEar" x1="0" y1="0" x2="0" y2="1"><stop stopColor="#ffa62b" /><stop offset=".5" stopColor="#ff7e6a" stopOpacity=".6" /><stop offset="1" stopColor="#6bdcae" stopOpacity="0" /></linearGradient>
      <linearGradient id="catChin" x1="0" y1="0" x2="0" y2="1"><stop offset=".5" stopColor="#4c6bf5" stopOpacity="0" /><stop offset="1" stopColor="#4552e8" /></linearGradient>
    </defs>
    <path d="M14 44Q20 60 38 59V40Z" fill="#2a32c8" />
    <path d="M0 9Q1 6 4 8L13 12Q20 8 30 8L33 2Q35 -1 38 1V44Q28 49 16 45Q9 43 2 38V22Z" fill="url(#catFace)" />
    <path d="M0 9Q1 6 4 8L13 12L10 24L1 26Z" fill="url(#catEar)" />
    <path d="M2 26H38V44Q28 49 16 45Q9 43 2 38Z" fill="url(#catChin)" />
    <circle cx="14" cy="25" r="4" fill="#fff" /><circle cx="30" cy="20.500" r="4" fill="#fff" /><path d="M22 28L23 24L26 26Z" fill="#fff" />
  </svg>
);

const Dots = ({ vertical, r = 2, gap = 7, color = "currentColor" }) => {
  const len = gap * 2 + r * 2;
  const w = vertical ? r * 2 : len;
  const h = vertical ? len : r * 2;
  return (
    <svg width={w} height={h} aria-hidden="true">
      {[0, 1, 2].map((i) => (
        <circle key={i} cx={vertical ? r : r + i * gap} cy={vertical ? r + i * gap : r} r={r} fill={color} />
      ))}
    </svg>
  );
};

const Plus = ({ size = 14, sw = 2, color }) => (
  <Line w={size} sw={sw} color={color} d={`M${size / 2} 1V${size - 1}M1 ${size / 2}H${size - 1}`} />
);
const Cross = ({ size = 14, sw = 1, color }) => (
  <Line w={size} sw={sw} color={color} d={`M1 1L${size - 1} ${size - 1}M${size - 1} 1L1 ${size - 1}`} />
);

const url = "https://coda.io/d/Lab-Setting-Up-a-Servlet-Project-with-Apache-Tomcat_deJ5PPPo1Ke/Lab-Setting-Up-a-Servlet-Project-with-Apache-Tomcat";

const steps = [
  "1. Open a command prompt/terminal in your `MyServletProject` directory.",
  "2. Set the `CLASSPATH` to include Tomcat's servlet-api.jar:",
  "   - Windows: `set CLASSPATH=C:\\path\\to\\tomcat\\lib\\servlet-api.jar;.`",
  "   - Linux/macOS: `export CLASSPATH=/path/to/tomcat/lib/servlet-api.jar:.`",
  "3. Compile the servlet:",
  "   ```",
  "   javac -d WEB-INF/classes HelloServlet.java",
  "   ```",
].join("\n");

const xmlBlock = ["   ```xml", '   <?xml version="1.0" encoding="UTF-8"?>', '   <web-app xmlns="http://xmlns.jcp.org/xml/ns/javaee"'].join("\n");

const tree = [
  ["ajaxWeatherLab"], ["aml3304F23"], ["aml3304Lab_JULY21"], ["anaconda3"], ["andrmaps_a"], ["android_CODE_Labs"],
  ["AndroidStudioProjects"], ["apache-tomcat"], ["bin", 1], ["conf", 1], ["lib", 1], ["logs", 1], ["temp", 1],
  ["webapps", 1], ["work", 1], ["AppData"], ["area51"], ["assignment1"],
];

const files = [
  "annotations-api", "catalina", "catalina-ant", "catalina-ha", "catalina-ssi", "catalina-storeconfig", "catalina-tribes",
  "ecj-4.20", "el-api", "jasper", "jasper-el", "jaspic-api", "jsp-api", "servlet-api", "tomcat-api", "tomcat-coyote",
  "tomcat-coyote-ffm", "tomcat-dbcp",
];

const apps = [
  { name: "Chrome", w: 59, icon: <ChromeProfile />, running: true },
  { name: "Edge", w: 59, icon: <Edge /> },
  { name: "Store", w: 59, icon: <Store /> },
  { name: "PowerShell", w: 59, icon: <PowerShell /> },
  { name: "Opera", w: 56, icon: <Opera /> },
  { name: "Firefox", w: 56, icon: <Firefox /> },
  { name: "System tools", w: 56, icon: <RedGear /> },
  { name: "Terminal", w: 56, icon: <Terminal />, running: true },
  { name: "Notepad", w: 56, icon: <Notepad />, running: true },
  { name: "Chrome second window", w: 56, icon: <ChromeProfile />, running: true },
  { name: "Sublime", w: 56, icon: <Sublime />, running: true },
];

function BrowserWindow() {
  return (
    <Browser>
      <TabStrip>
        <TabSearch aria-label="Search tabs"><Line w={12} h={8} sw={2} d="M2 1.500L6 5.500L10 1.500" /></TabSearch>
        <Tab>
          <CodaLogo />
          <TabTitle>Lab Setting Up a Servlet Project</TabTitle>
          <button aria-label="Close tab"><Cross size={11} sw={2} /></button>
        </Tab>
        <NewTab aria-label="New tab"><Plus size={14} sw={2} /></NewTab>
        <WindowButtons>
          <button aria-label="Minimize"><Line w={14} h={2} sw={1} d="M0 1H14" /></button>
          <button aria-label="Restore"><Line w={14} sw={1} d="M1 3.500H10.500V13.500H1ZM3.500 3V1H13V11.500H11" /></button>
          <button aria-label="Close"><Cross size={14} /></button>
        </WindowButtons>
      </TabStrip>
      <Toolbar>
        <NavButton aria-label="Back"><Line w={16} d="M15 8H1.500M8 1.500L1.500 8L8 14.500" /></NavButton>
        <NavButton aria-label="Forward" $dim><Line w={16} d="M1 8H14.500M8 1.500L14.500 8L8 14.500" /></NavButton>
        <NavButton aria-label="Reload"><Line w={18} d="M15 6A7 7 0 1 0 16 10M16 2V7H11" /></NavButton>
        <Omnibox>
          <SiteInfo><Line w={18} h={16} d="M1.500 4A2 2 0 1 0 5.500 4A2 2 0 1 0 1.500 4M10 4H16M1.500 12H8M12 12A2 2 0 1 0 16 12A2 2 0 1 0 12 12" /></SiteInfo>
          <UrlInput aria-label="Address" defaultValue={url} />
        </Omnibox>
        <ToolbarEnd>
          <button aria-label="Profile"><Face size={24} /></button>
          <button aria-label="Menu"><Dots vertical gap={7} /></button>
        </ToolbarEnd>
      </Toolbar>
      <Viewport>
        <Doc>
          <DocHeader>
            <BackLink href="#docs"><Line w={10} h={12} d="M8 1.500L3 6L8 10.500" />All docs</BackLink>
            <HeaderRule />
            <PageIcon aria-label="Page icon"><Line w={22} h={28} sw={2} color="#bdbdbd" d="M3 2H13L20 9V24Q20 26 18 26H4Q2 26 2 24V4Q2 2 4 2M13 2V9H20" /></PageIcon>
            <DocTitle>Lab Setting Up a Servlet Project with Apache Tomcat</DocTitle>
          </DocHeader>
          <DocBody>
            <TrailingLine>view its contents</TrailingLine>
            <Paragraph>jar = java archive resource file (zip file format)</Paragraph>
            <Paragraph>{steps}</Paragraph>
            <Paragraph>Quick Check: If compilation is successful, you should see no errors, and a `HelloServlet.class` file should appear in the `WEB-INF/classes` directory.</Paragraph>
            <Paragraph>### 5. Configure the Web Application</Paragraph>
            <Paragraph>1. In the `WEB-INF` directory, create a file named `web.xml` with the following content:</Paragraph>
            <Paragraph>{xmlBlock}</Paragraph>
          </DocBody>
          <DragHandle aria-label="Drag line"><Dots vertical r={3} gap={8} color="#757575" /></DragHandle>
          <SideTab $side="left" aria-label="Expand pages"><Line w={18} h={16} d="M2 2L8 8L2 14M10 2L16 8L10 14" /></SideTab>
          <SideTab $side="right" aria-label="Open panel"><Line w={18} h={16} d="M8 2L2 8L8 14M16 2L10 8L16 14" /></SideTab>
          <FloatingActions>
            <RoundButton $accent aria-label="Assistant">
              <svg width="30" height="28" viewBox="0 0 30 28" fill="#0f5fb3" aria-hidden="true">
                <path d="M20 7Q21.500 14.500 29 16Q21.500 17.500 20 25Q18.500 17.500 11 16Q18.500 14.500 20 7Z" />
                <path d="M7.500 0Q8.500 6 14 7Q8.500 8 7.500 13.500Q6.500 8 1 7Q6.500 6 7.500 0Z" />
                <path d="M5 19Q6 23 10 24Q6 25 5 28.500Q4 25 0 24Q4 23 5 19Z" />
              </svg>
            </RoundButton>
            <RoundButton aria-label="Help">?</RoundButton>
          </FloatingActions>
        </Doc>
        <VScroll>
          <Triangle w={8} h={5} color="#bdbdbd" d="M0 5L4 1L8 5Z" />
          <VThumb />
          <Triangle w={8} h={5} color="#bdbdbd" d="M0 0L4 4L8 0Z" />
        </VScroll>
        <HScroll>
          <Triangle w={5} h={8} color="#bdbdbd" d="M5 0L1 4L5 8Z" />
          <HThumb />
          <Triangle w={5} h={8} color="#bdbdbd" d="M0 0L4 4L0 8Z" />
        </HScroll>
      </Viewport>
    </Browser>
  );
}

const Caret = () => <Triangle w={10} h={6} d="M0 0H10L5 6Z" />;

function CaptureTool() {
  const modes = [
    ["All-in-One", "0 0 8px 0", <svg key="a" width="18" height="18"><circle cx="9" cy="9" r="6.500" fill="currentColor" /><circle cx="9" cy="9" r="8.300" fill="none" stroke="currentColor" /></svg>],
    ["Image", "8px 0 0 8px", <svg key="i" width="20" height="16"><path d="M1 2H5Q6 0 8 0H12Q14 0 15 2H19Q20 2 20 3V15Q20 16 19 16H1Q0 16 0 15V3Q0 2 1 2Z" fill="#2d87c6" /><circle cx="10" cy="8.500" r="4" fill="#e7eef5" /><circle cx="16.500" cy="5" r="1" fill="#e7eef5" /></svg>],
    ["Video", "0 8px 0 0", <svg key="v" width="18" height="14"><rect y="1" width="13" height="12" rx="1" fill="currentColor" /><path d="M14 6L18 3V11L14 8Z" fill="currentColor" /></svg>],
  ];
  return (
    <CaptureWindow>
      <CaptureTitle>
        <SnagitLogo />
        <MenuBar>
          {["File", "Edit", "View", "Help"].map((m) => (
            <MenuItem key={m}>{m}</MenuItem>
          ))}
        </MenuBar>
        <CaptureButtons>
          <button aria-label="Minimize"><Line w={12} h={2} sw={1} d="M0 1H12" /></button>
          <button aria-label="Close"><Cross size={13} /></button>
        </CaptureButtons>
      </CaptureTitle>
      <CaptureBody>
        <ModeTabs>
          {modes.map(([name, corners, icon]) => (
            <ModeTab key={name} $active={name === "Image"} $corners={corners}>{icon}{name}</ModeTab>
          ))}
        </ModeTabs>
        <Fields>
          {[["Selection:", "Region"], ["Effects:", "None"], ["Share:", "None"]].map(([label, value]) => (
            <Field key={label}>
              {label}
              <SelectBox>
                <select defaultValue={value}><option>{value}</option></select>
                <Caret />
                {value === "Region" && <Gear size={16} />}
              </SelectBox>
            </Field>
          ))}
        </Fields>
        <Toggles>
          {["Preview in Editor", "Copy to Clipboard", "Capture Cursor", "Time Delay"].map((t, i) => (
            <ToggleRow key={t}>
              {t}
              <Toggle type="checkbox" defaultChecked={i === 0} />
              {i === 3 && <Line w={10} h={14} sw={3} color="#2b7ab2" d="M2 2L7 7L2 12" />}
            </ToggleRow>
          ))}
        </Toggles>
        <CapturePanel>
          <ResetButton aria-label="Reset">
            <Line w={22} sw={3} d="M3 8H8M2.500 2V8M4 7A8 8 0 1 1 7 19" />
          </ResetButton>
          <CaptureRing>
            <svg width="112" height="112" aria-hidden="true"><circle cx="56" cy="56" r="55" fill="none" stroke="#46555d" strokeDasharray="3 2" /></svg>
            <CaptureButton>Capture</CaptureButton>
          </CaptureRing>
          LWin
        </CapturePanel>
      </CaptureBody>
      <CaptureFooter>
        <button>
          <svg width="20" height="20" viewBox="0 0 20 20" fill="none" stroke="currentColor" aria-hidden="true">
            <circle cx="7.500" cy="7.500" r="4.500" strokeWidth="2.400" /><circle cx="7.500" cy="7.500" r="6.500" strokeWidth="2" strokeDasharray="2.550 2.550" />
            <circle cx="16" cy="16.500" r="2.500" strokeWidth="1.800" />
          </svg>
          Presets
        </button>
        <button aria-label="Add preset"><Plus size={12} sw={2} /><Triangle w={6} h={4} d="M0 0H6L3 4Z" /></button>
        <button>
          <svg width="18" height="17" viewBox="0 0 18 17" fill="none" stroke="#6d7d85" strokeWidth="2" aria-hidden="true"><path d="M10 3H1V16H14V8M6 11L16.500 1" /></svg>
          Open Editor
        </button>
      </CaptureFooter>
    </CaptureWindow>
  );
}

function FileExplorer() {
  return (
    <>
      <ExplorerShadow />
      <Explorer>
        <ExplorerTabs>
          <ExplorerTab><Folder />lib<button aria-label="Close tab"><Cross size={12} /></button></ExplorerTab>
          <ExplorerNewTab aria-label="New tab"><Plus size={13} sw={1} /></ExplorerNewTab>
          <ExplorerButtons>
            <button aria-label="Minimize"><Line w={12} h={2} sw={1} d="M0 1H12" /></button>
            <button aria-label="Maximize"><Line w={13} sw={1} d="M1 1H12V12H1Z" /></button>
            <button aria-label="Close"><Cross size={13} /></button>
          </ExplorerButtons>
        </ExplorerTabs>
        <ExplorerNav>
          <button aria-label="Back"><Line w={16} sw={1} d="M15 8H1M7 2L1 8L7 14" /></button>
          <button aria-label="Forward"><Line w={16} sw={1} color="#b4b9bc" d="M1 8H15M9 2L15 8L9 14" /></button>
          <button aria-label="Up"><Line w={16} sw={1} d="M8 15V1M2 7L8 1L14 7" /></button>
          <button aria-label="Refresh"><Line w={16} sw={1} d="M13 3A7 7 0 1 0 15 8M14 1V5H10" /></button>
          <Breadcrumb>
            <Line w={19} sw={2} color="#5d6266" d="M3 1H16Q18 1 18 3V12Q18 14 16 14H3Q1 14 1 12V3Q1 1 3 1M7 14V17M12 14V17M5 18H14" />
            <Line w={7} h={11} sw={1} d="M1 1L6 5.500L1 10" />
            <Dots r={1} gap={6} />
            <span>lib</span>
          </Breadcrumb>
          <ExplorerSearch aria-label="Search lib" placeholder="Search lib" />
        </ExplorerNav>
        <CommandBar>
          <button>
            <svg width="19" height="19" fill="none" aria-hidden="true"><circle cx="9.500" cy="9.500" r="8.500" stroke="#5b5f62" /><path d="M9.500 5V14M5 9.500H14" stroke="#0b78d0" strokeWidth="1.200" /></svg>
            New
            <Line w={8} h={5} sw={1} color="#777" d="M1 1L4 4L7 1" />
          </button>
          <CommandRule />
          <button aria-label="Cut">
            <svg width="18" height="20" fill="none" aria-hidden="true"><path d="M4 1L12 13M14 1L6 13" stroke="#555" /><circle cx="4" cy="16" r="3" stroke="#0b78d0" strokeWidth="1.400" /><circle cx="14" cy="16" r="3" stroke="#0b78d0" strokeWidth="1.400" /></svg>
          </button>
          <button aria-label="Copy">
            <svg width="20" height="20" fill="none" strokeWidth="1.400" aria-hidden="true"><path d="M5 5H3Q1 5 1 7V16Q1 18 3 18H9Q11 18 11 16" stroke="#666" /><rect x="7" y="1" width="11" height="13" rx="2" stroke="#0b78d0" /></svg>
          </button>
          <button aria-label="Paste">
            <svg width="18" height="20" fill="none" strokeWidth="1.400" aria-hidden="true"><path d="M7 19H2Q1 19 1 18V3H14V5M5 1H10V4H5Z" stroke="#c4c6c8" /><rect x="8" y="7" width="9" height="12" rx="1" stroke="#a5cdec" /></svg>
          </button>
          <button aria-label="More"><Dots r={2} gap={8} /></button>
          <button>
            <svg width="20" height="16" fill="none" strokeWidth="1.400" aria-hidden="true"><path d="M12 1H3Q1 1 1 3V13Q1 15 3 15H12" stroke="#5b5f62" /><path d="M12 1H17Q19 1 19 3V13Q19 15 17 15H12Z" stroke="#0b78d0" /></svg>
            Preview
          </button>
        </CommandBar>
        <Panes>
          <Tree>
            {tree.map(([name, nested]) => (
              <TreeItem key={name} $nested={nested} $selected={name === "lib"}><button><Folder />{name}</button></TreeItem>
            ))}
          </Tree>
          <Track><Thumb $start={63} $length={21} /></Track>
          <PaneRule />
          <ListPane>
            <ListClip>
              <FileTable>
                <thead><tr><th scope="col"><Line w={10} h={6} sw={1} color="#555" d="M1 5L5 1L9 5" />Name</th></tr></thead>
                <tbody>
                  {files.map((f) => (
                    <FileRow key={f} $selected={f === "servlet-api"}><td><FileName><Duke />{f}</FileName></td></FileRow>
                  ))}
                </tbody>
              </FileTable>
            </ListClip>
            <Track $horizontal><HorizontalThumb /></Track>
          </ListPane>
          <ListScroll><Track><Thumb $start={21} $length={247} /></Track></ListScroll>
        </Panes>
        <StatusBar>
          <StatusGroup>33 items</StatusGroup>
          <StatusGroup><span>1 item selected</span><span>279 KB</span></StatusGroup>
          <ViewButtons>
            <button aria-label="Details view"><Line w={14} h={14} sw={1} color="#444" d="M0 1.500H14M0 5.500H14M0 9.500H14M0 13.500H14" /></button>
            <button aria-label="Large icons"><Line w={15} h={15} sw={1} color="#444" d="M1 1.500H14V11.500H1ZM1 14H14" /></button>
          </ViewButtons>
        </StatusBar>
      </Explorer>
    </>
  );
}

export default function App() {
  return (
    <>
      <GlobalStyle />
      <Desktop>
        <BrowserWindow />
        <Taskbar>
          <Weather><Sun /><span>17°C<Muted>Sunny</Muted></span></Weather>
          <Apps>
            <AppSlot $w={72} aria-label="Start"><WindowsLogo /></AppSlot>
            <SearchPill><Line w={18} h={18} sw={2} d="M1.500 7.500A6 6 0 1 0 13.500 7.500A6 6 0 1 0 1.500 7.500M12 12L17 17" />Search</SearchPill>
            <AppSlot $w={70} aria-label="Task view"><TaskView /></AppSlot>
            <AppSlot $w={56} aria-label="Teams"><Teams /></AppSlot>
            <AppSlot $w={86} aria-label="Copilot"><Copilot /></AppSlot>
            <AppSlot $w={67} $running $active aria-label="File Explorer"><ActiveTile><ExplorerApp /></ActiveTile></AppSlot>
            <AppSlot $w={67}><DellWord>DELL</DellWord></AppSlot>
            {apps.map((a) => (
              <AppSlot key={a.name} $w={a.w} $running={a.running} aria-label={a.name}>{a.icon}</AppSlot>
            ))}
          </Apps>
          <Tray>
            <button aria-label="Hidden icons"><Line w={14} h={9} sw={2} d="M1 8L7 2L13 8" /></button>
            <TrayLanguage><Muted>ENG</Muted><Muted>US</Muted></TrayLanguage>
            <Line w={20} h={16} sw={1} d="M1 5Q10 -3 19 5M3.500 8Q10 2 16.500 8M6 10.500Q10 6.500 14 10.500M9 13.500A1 1 0 1 0 11 13.500A1 1 0 1 0 9 13.500" />
            <Line w={20} h={16} sw={1} d="M1 5.500H4L8 2V14L4 10.500H1ZM11 5Q13 8 11 11M14 3Q17.500 8 14 13M16.500 1Q21.500 8 16.500 15" />
            <svg width="20" height="16" aria-hidden="true"><path d="M8 3.500H15Q17 3.500 17 5.500V12.500Q17 14.500 15 14.500H3Q1 14.500 1 12.500V9" fill="none" stroke="currentColor" strokeWidth="1.400" /><path d="M8 5H15.500V13H2.500V10H5ZM18 6.500H20V11.500H18ZM4 0L1 6H3L2 9L6 4H4L5 0Z" fill="currentColor" /></svg>
            <Clock><span>2:05 PM</span><span>2024-10-18</span></Clock>
            <Line w={18} h={18} sw={1} d="M10 2H8Q3.500 3 3.500 8V11L1.500 14H16L14.500 11V9M7 14.500Q9 18.500 11 14.500M7 6.500H10.500L7 10.500H10.500M12.500 1.500H16L12.500 5.500H16" />
          </Tray>
        </Taskbar>
        <Mascot><Cat /></Mascot>
        <CaptureTool />
        <NoteAvatar><Face size={28} /></NoteAvatar>
        <FileExplorer />
        <PenBadge>
          <svg width="42" height="42" viewBox="0 0 42 42" aria-hidden="true">
            <circle cx="21" cy="21" r="21" fill="#000" />
            <path d="M15 6H27L33 19L24 37H22L21.500 23H20.500L20 37H18L9 19Z" fill="#fff" /><circle cx="21" cy="18.500" r="4" fill="#000" /><path d="M21 18V38" stroke="#000" strokeWidth="1.500" />
          </svg>
        </PenBadge>
        <NoteBadge><Line w={30} h={14} sw={2} color="#173a4a" d="M1 2Q15 20 29 2M9 6Q15 8 21 6" /></NoteBadge>
        <RedArrow width="460" height="110" viewBox="0 0 460 110" aria-hidden="true">
          <path d="M5 27.500L52 11L50 26.500L444 79L442 94L48 41L47 56Z" fill="#ea0a0a" />
        </RedArrow>
        <Callout />
      </Desktop>
    </>
  );
}
